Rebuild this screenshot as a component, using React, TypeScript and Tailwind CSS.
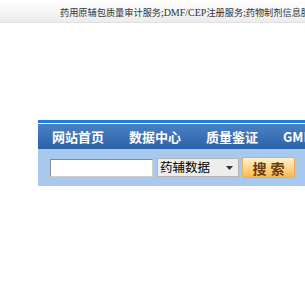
export default function App() {
  const nav = ["网站首页", "数据中心", "质量鉴证", "GMP认证"];
  return (
    <div className="w-[305px] h-[305px] overflow-hidden bg-white" style={{ fontFamily: '"SimSun", "Noto Sans CJK SC", sans-serif' }}>
      {/* top strip */}
      <div className="h-[23px] bg-gradient-to-b from-white to-[#ececec] border-b border-[#e2e2e2] flex items-center whitespace-nowrap overflow-hidden">
        <span className="pl-[60px] pt-[3px] text-[9.2px] text-[#333] leading-none">
          药用原辅包质量审计服务;<span className="text-[10px]" style={{ fontFamily: '"Liberation Serif", serif' }}>DMF/CEP</span>注册服务;药物制剂信息服务
        </span>
      </div>

      <div className="mt-[97px] ml-[38px]">
        <div className="h-[3px] bg-[#1e7fe0]" />
        <div className="h-[1px] bg-white" />
        <div className="h-[25px] bg-gradient-to-b from-[#4a80c4] to-[#2c63a8] flex items-center whitespace-nowrap overflow-hidden">
          {nav.map((n, i) => (
            <span
              key={n}
              className={`text-white font-bold text-[13px] leading-none ${i === 0 ? "ml-[14px]" : "ml-[25px]"}`}
            >
              {n}
            </span>
          ))}
        </div>
        <div className="h-[37px] bg-[#a8c8ee] flex items-center">
          <input className="ml-[12px] w-[103px] h-[18px] bg-white border border-[#8a8a8a] border-r-[#d0d0d0] border-b-[#d0d0d0] outline-none" />
          <div className="ml-[4px] w-[82px] h-[19px] bg-[#ededed] border border-[#b5b5b5] flex items-center justify-between pl-[2px] pr-[5px]">
            <span className="text-[12.5px] text-black leading-none">药辅数据</span>
            <svg width="7" height="4" viewBox="0 0 7 4"><path d="M0 0h7L3.5 4z" fill="#333" /></svg>
          </div>
          <div className="ml-[3px] w-[53px] h-[21px] rounded-[2px] bg-gradient-to-b from-[#fff1cf] via-[#ffd78a] to-[#f8b94c] border border-[#e8b05a] flex items-center justify-center">
            <span className="text-[14px] font-bold text-[#6a3a10] leading-none tracking-[4px] pl-[4px]">搜索</span>
          </div>
        </div>
      </div>
    </div>
  );
}
